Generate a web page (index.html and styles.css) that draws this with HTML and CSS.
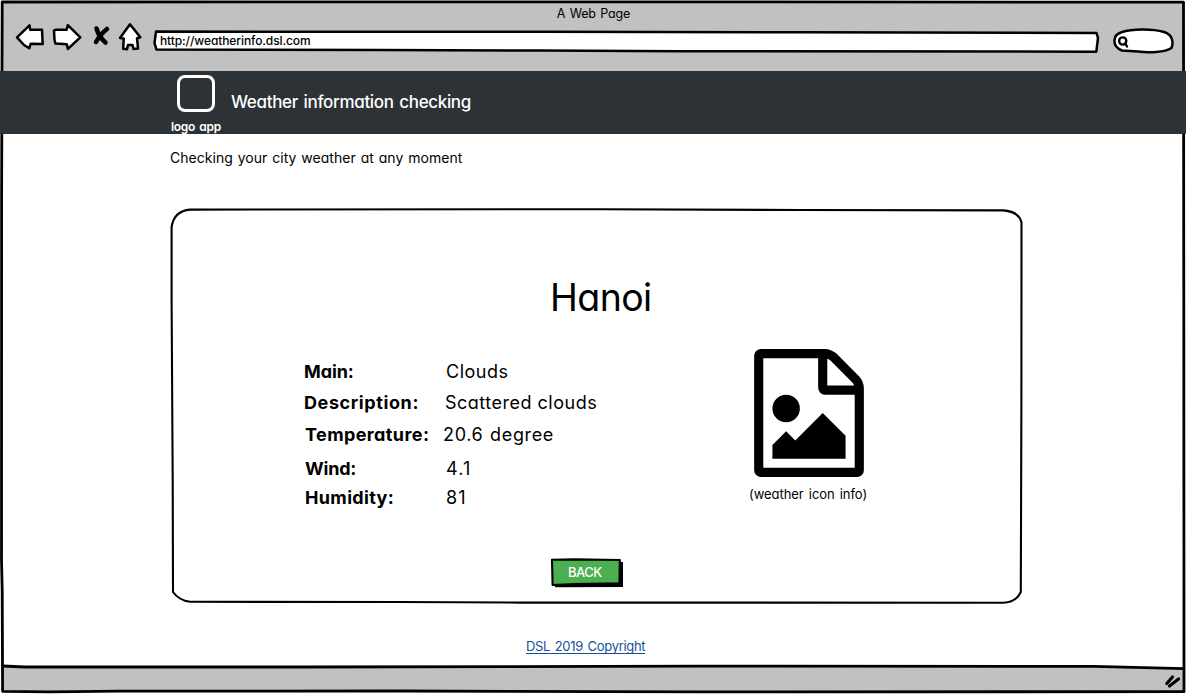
FILE: index.html
```html
<!DOCTYPE html>
<html lang="en">
<head>
<meta charset="utf-8">
<title>Weather information checking</title>
<link rel="stylesheet" href="styles.css">
</head>
<body>
<div class="window">
  <svg class="frame" viewBox="0 0 1186 694" aria-hidden="true">
    <path class="chrome" d="M2 2H1184V80H2Z"/>
    <path class="chrome" d="M3 667L500 667L860 666L1094 666L1184 669V692L500 691.5L90 691.5L3 691.5Z"/>
    <path class="edge" d="M2.2 2L500 1.8L1183.5 2.2L1183.8 320L1184 691.7L700 691.8L400 691L120 691.2L50 691.9L2.6 691.3L2.2 590L1.5 560L1.6 200Z"/>
    <path class="edge" d="M2.5 666L25 667L300 667L700 666.2L1094 666.3L1184 668.7"/>
    <path class="grip" d="M1166.800 683.5L1172.5 677M1169.5 686L1178.5 679"/>
  </svg>

  <header class="toolbar">
    <div class="window-title">A Web Page</div>
    <nav class="controls">
      <svg class="ink back" viewBox="14 22 32 32"><path d="M17 37.3L29.5 25.3L30.2 29.7L42 29.8L42.7 44L30.7 43.8L29.3 48.2L24 45Z"/></svg>
      <svg class="ink forward" viewBox="50 22 32 32"><path d="M54 30.5L56 29.8L66.7 29.7L67.8 25.2L80.3 37.3L67.8 49L66.8 44.2L55.5 43.6L54.5 40Z"/></svg>
      <svg class="cross" viewBox="90 22 24 32"><path d="M96.5 28.5Q99 37 105.500 42.5M107 29Q100.500 34 96 42"/></svg>
      <svg class="ink home" viewBox="116 22 28 32"><path d="M130 24.3L140.3 37.2L137 38.3L138 48.5L133.5 49L132.5 45H128L127 49.2L123.2 48.8L123.7 38.5L120 38Z"/></svg>
      <div class="address">
        <svg class="ink shape" viewBox="152 22 948 32"><path d="M156 31.6L540 31.7L800 32.3L1096.5 33L1098 38L1096.3 51.7L680 51.2L540 50.6L380 50L156.5 49.6L154.5 43Z"/></svg>
        <span class="url">http://weatherinfo.dsl.com</span>
      </div>
      <svg class="ink search" viewBox="1112 22 64 32"><path d="M1122 50.5C1112 47 1112 35 1121.5 32.2C1132 28.8 1152 28.6 1164 32C1173 34.5 1173.5 43 1171.5 48C1165 52.5 1148 53 1138 51.5Z"/><circle class="lens" cx="1122.7" cy="41" r="3.6"/><path class="lens" d="M1125.300 43.500L1127 46.5"/></svg>
    </nav>
  </header>

  <div class="appbar">
    <div class="logo">
      <div class="logo-box"></div>
      <div class="logo-label">logo app</div>
    </div>
    <h1 class="app-title">Weather information checking</h1>
  </div>

  <main class="content">
    <p class="tagline">Checking your city weather at any moment</p>
    <section class="card">
      <svg class="shape outline" viewBox="170 208 853 396" aria-hidden="true"><path d="M190 209.6L600 209.2L800 210L1003 210.4Q1019 211.5 1021.5 222.5L1021.4 400L1020.8 592Q1016 602.5 1003 602.7L520 602.6L400 602L190 601.8Q179 600.5 173 592L172.7 480L171.6 300V227Q174 211 190 209.6Z"/></svg>
      <h2 class="city">Hanoi</h2>
      <div class="details">
        <dl class="facts">
          <div class="fact main"><dt>Main:</dt><dd>Clouds</dd></div>
          <div class="fact description"><dt>Description:</dt><dd>Scattered clouds</dd></div>
          <div class="fact temperature"><dt>Temperature:</dt><dd>20.6 degree</dd></div>
          <div class="fact wind"><dt>Wind:</dt><dd>4.1</dd></div>
          <div class="fact humidity"><dt>Humidity:</dt><dd>81</dd></div>
        </dl>
        <figure class="picture">
          <svg class="picture-icon" viewBox="0 0 1536 1792"><path d="M1468 380q28 28 48 76t20 88v1152q0 40-28 68t-68 28h-1344q-40 0-68-28t-28-68v-1600q0-40 28-68t68-28h896q40 0 88 20t76 48zM1024 136v376h376q-10-29-22-41l-313-313q-12-12-41-22zM1408 1664v-1024h-416q-40 0-68-28t-28-68v-416h-768v1536h1280zM1280 1216v320h-1024v-192l192-192 128 128 384-384zM448 1024q-80 0-136-56t-56-136 56-136 136-56 136 56 56 136-56 136-136 56z"/></svg>
          <figcaption>(weather icon info)</figcaption>
        </figure>
      </div>
      <button class="back-button" type="button">
        <svg class="shape" viewBox="550 558 74 30" aria-hidden="true"><path d="M555 562H623V587L555 587.3Z"/><path class="face" d="M552 559.8L575 559.4L619.8 560L619.5 583.3L575 584L552.6 585Z"/></svg>
        <span class="button-label">BACK</span>
      </button>
    </section>
    <a class="copyright" href="#">DSL 2019 Copyright</a>
  </main>
</div>
</body>
</html>
```
FILE: styles.css
```css
body {
  margin: 0;
  background: #fff;
  color: #000;
  font-family: Inter, "Open Sans", sans-serif;
  font-feature-settings: "cv11";
}

.window {
  position: relative;
  width: 1186px;
  height: 694px;
  overflow: hidden;
}

.frame {
  position: absolute;
  inset: 0;
  z-index: -1;
}

.chrome { fill: #c1c1c1; }
.edge { fill: none; stroke: #000; stroke-width: 2.8; stroke-linejoin: round; }
.grip { fill: none; stroke: #000; stroke-width: 3.2; stroke-linecap: round; }

.toolbar { height: 71px; }

.window-title {
  box-sizing: border-box;
  height: 22px;
  padding: 5px 0 0 1px;
  text-align: center;
  font-size: 12.5px;
  line-height: 17px;
  letter-spacing: -0.15px;
  word-spacing: 1px;
}

.controls {
  display: flex;
  height: 32px;
  padding-left: 14px;
}

.ink { fill: #fff; stroke: #000; stroke-width: 2.5; stroke-linejoin: round; }
.back { width: 32px; margin-right: 4px; }
.forward { width: 32px; margin-right: 8px; }
.cross { width: 24px; margin-right: 2px; fill: none; stroke: #000; stroke-width: 4.5; stroke-linecap: round; }
.home { width: 28px; margin-right: 8px; }
.search { width: 64px; margin-left: 12px; }
.lens { fill: none; stroke-width: 2.4; stroke-linecap: round; }

.address {
  position: relative;
  width: 948px;
}

.shape {
  position: absolute;
  inset: 0;
  width: 100%;
  height: 100%;
}

.url {
  position: relative;
  display: block;
  padding: 10px 0 0 8px;
  font-size: 12px;
  font-weight: 500;
  line-height: 17px;
  letter-spacing: -0.1px;
}

.appbar {
  display: flex;
  height: 63px;
  padding-left: 170px;
  background: #2d3236;
  color: #fff;
}

.logo {
  width: 51px;
  padding-top: 4px;
  margin-right: 10px;
}

.logo-box {
  box-sizing: border-box;
  width: 38px;
  height: 37px;
  margin-left: 7px;
  border: 3px solid #fff;
  border-radius: 8px;
}

.logo-label {
  padding-left: 1px;
  font-size: 12px;
  font-weight: 600;
  line-height: 29px;
  letter-spacing: -0.3px;
  word-spacing: 1.5px;
  white-space: nowrap;
}

.app-title {
  margin: 0;
  font-size: 17px;
  font-weight: 500;
  line-height: 62px;
  letter-spacing: -0.34px;
  word-spacing: 1.5px;
}

.content { padding-left: 170px; }

.tagline {
  margin: 0;
  padding: 14px 0 40px;
  font-size: 14px;
  line-height: 20px;
  letter-spacing: 0.03px;
  word-spacing: 0.9px;
}

.card {
  position: relative;
  box-sizing: border-box;
  width: 853px;
  height: 396px;
  padding-top: 65px;
}

.outline { fill: none; stroke: #000; stroke-width: 2.1; stroke-linejoin: round; }

.city {
  margin: 0 0 26px;
  padding-left: 380px;
  font-size: 37.5px;
  font-weight: 400;
  line-height: 50px;
  letter-spacing: -0.6px;
}

.details {
  display: flex;
  padding-left: 134px;
}

.facts {
  width: 445px;
  margin: 0;
  padding-top: 7px;
  font-size: 18px;
}

.fact {
  display: grid;
  grid-template-columns: 142px 1fr;
  line-height: 31px;
}

.fact dt { font-weight: 700; }
.fact dd { margin: 0; letter-spacing: 0.5px; }
.main dt { letter-spacing: -0.1px; }
.description { grid-template-columns: 141px 1fr; }
.description dt { letter-spacing: 0.6px; }
.temperature { grid-template-columns: 138px 1fr; padding-left: 1px; line-height: 33px; }
.temperature dt { letter-spacing: 0.4px; }
.temperature dd { letter-spacing: 0.65px; word-spacing: 1px; }
.wind { grid-template-columns: 141px 1fr; padding-left: 1px; line-height: 35px; }
.wind dt { letter-spacing: -0.2px; }
.wind dd { letter-spacing: 1.2px; }
.humidity { grid-template-columns: 141px 1fr; padding-left: 1px; line-height: 24px; margin-bottom: -2px; }
.humidity dt { letter-spacing: 0.35px; }
.humidity dd { letter-spacing: 1px; }

.picture {
  width: 120px;
  margin: 0;
}

.picture-icon {
  display: block;
  width: 110px;
  height: 128px;
  margin-left: 5px;
}

.picture figcaption {
  font-size: 13px;
  line-height: 34px;
  letter-spacing: -0.05px;
  word-spacing: 1.5px;
  white-space: nowrap;
}

.back-button {
  position: relative;
  display: block;
  width: 74px;
  height: 30px;
  margin: 47px 0 0 380px;
  padding: 0 0 1px 18px;
  border: 0;
  background: none;
  color: #fff;
  font: 500 13px/29px Inter, sans-serif;
  letter-spacing: -0.5px;
  text-align: left;
}

.face { fill: #4caf50; stroke: #000; stroke-width: 2.1; stroke-linejoin: round; }
.button-label { position: relative; }

.copyright {
  display: block;
  width: max-content;
  margin: 34px 0 0 356px;
  color: #174f98;
  font-size: 13px;
  line-height: 17px;
  letter-spacing: -0.3px;
  word-spacing: 1.2px;
  text-decoration-thickness: 1px;
  text-underline-offset: 2px;
  text-decoration-skip-ink: none;
}
```
